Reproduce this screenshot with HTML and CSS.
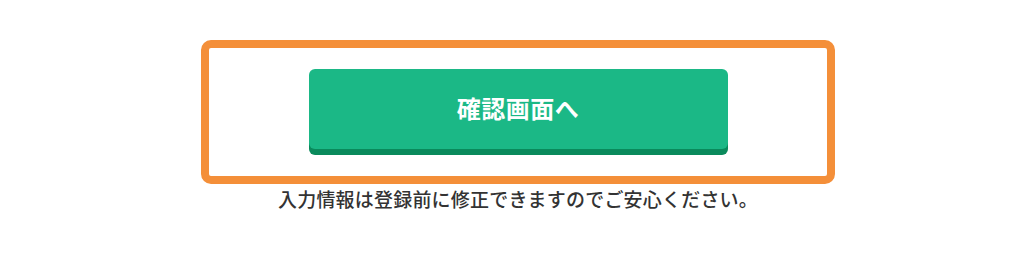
FILE: index.html
```html
<!DOCTYPE html>
<html lang="ja">
<head>
    <meta charset="UTF-8">
    <meta name="viewport" content="width=device-width, initial-scale=1.0">
    <title>確認画面へ</title>
    <link rel="stylesheet" href="styles.css">
</head>
<body>
    <div class="container">
        <div class="submit-box">
            <button type="button" class="btn">確認画面へ</button>
        </div>
        <p class="note">入力情報は登録前に修正できますのでご安心ください。</p>
    </div>
</body>
</html>
```

FILE: styles.css
```css
body {
    font-family: "Noto Sans CJK JP", "Noto Sans", sans-serif;
    background-color: #fff;
    margin: 0;
    padding: 0;
}

.container {
    display: flex;
    flex-direction: column;
    align-items: center;
    padding-top: 40px;
    padding-left: 12px;
}

.submit-box {
    box-sizing: border-box;
    width: 634px;
    height: 144px;
    border: 8px solid #f48f39;
    border-radius: 10px;
    display: flex;
    justify-content: center;
    padding-top: 21px;
}

.btn {
    width: 419px;
    height: 80px;
    background-color: #1bb886;
    color: #fff;
    border: none;
    border-radius: 6px;
    box-shadow: 0 6px 0 #0a8a5c;
    font-family: inherit;
    font-size: 24px;
    font-weight: bold;
    letter-spacing: 0.5px;
    line-height: 1;
    cursor: pointer;
    padding: 0 0 2px;
}

.btn:hover {
    background-color: #22c391;
}

.note {
    margin: 2px 0 0;
    font-size: 19px;
    font-weight: 500;
    line-height: 26px;
    letter-spacing: 0.2px;
    color: #333;
}
```
